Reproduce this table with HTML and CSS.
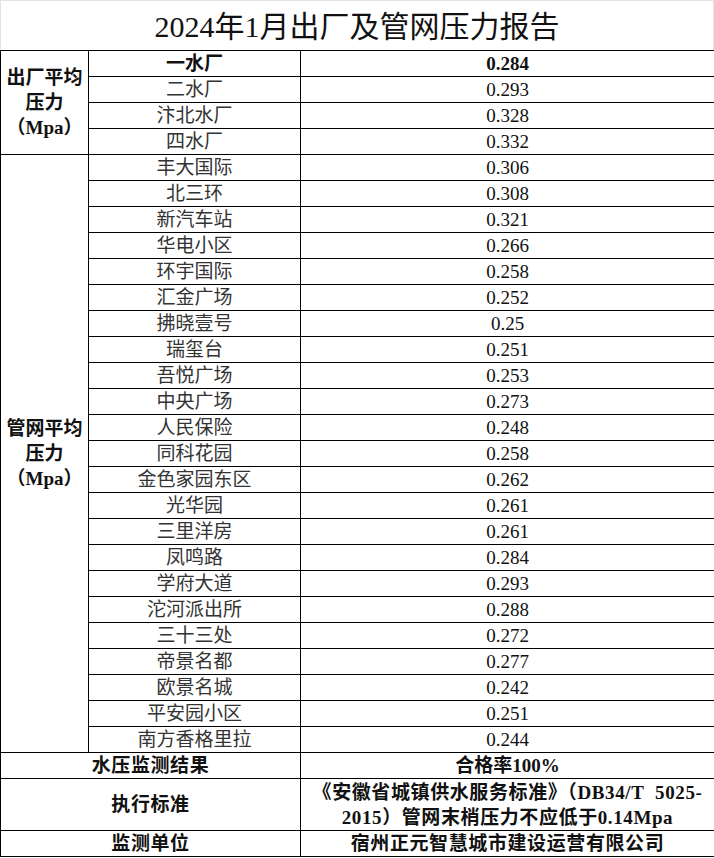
FILE: index.html
```html
<!DOCTYPE html>
<html lang="zh">
<head>
<meta charset="utf-8">
<title>2024年1月出厂及管网压力报告</title>
<link rel="stylesheet" href="styles.css">
</head>
<body>
<div class="sheet">
  <div class="title">2024年1月出厂及管网压力报告</div>
  <table class="report">
    <colgroup><col class="c1"><col class="c2"><col class="c3"></colgroup>
    <tbody>
      <tr class="strong"><td rowspan="4" class="group">出厂平均<br>压力<br>（Mpa）</td><td class="name">一水厂</td><td class="val">0.284</td></tr>
      <tr><td class="name">二水厂</td><td class="val">0.293</td></tr>
      <tr><td class="name">汴北水厂</td><td class="val">0.328</td></tr>
      <tr><td class="name">四水厂</td><td class="val">0.332</td></tr>
      <tr><td rowspan="23" class="group">管网平均<br>压力<br>（Mpa）</td><td class="name">丰大国际</td><td class="val">0.306</td></tr>
      <tr><td class="name">北三环</td><td class="val">0.308</td></tr>
      <tr><td class="name">新汽车站</td><td class="val">0.321</td></tr>
      <tr><td class="name">华电小区</td><td class="val">0.266</td></tr>
      <tr><td class="name">环宇国际</td><td class="val">0.258</td></tr>
      <tr><td class="name">汇金广场</td><td class="val">0.252</td></tr>
      <tr><td class="name">拂晓壹号</td><td class="val">0.25</td></tr>
      <tr><td class="name">瑞玺台</td><td class="val">0.251</td></tr>
      <tr><td class="name">吾悦广场</td><td class="val">0.253</td></tr>
      <tr><td class="name">中央广场</td><td class="val">0.273</td></tr>
      <tr><td class="name">人民保险</td><td class="val">0.248</td></tr>
      <tr><td class="name">同科花园</td><td class="val">0.258</td></tr>
      <tr><td class="name">金色家园东区</td><td class="val">0.262</td></tr>
      <tr><td class="name">光华园</td><td class="val">0.261</td></tr>
      <tr><td class="name">三里洋房</td><td class="val">0.261</td></tr>
      <tr><td class="name">凤鸣路</td><td class="val">0.284</td></tr>
      <tr><td class="name">学府大道</td><td class="val">0.293</td></tr>
      <tr><td class="name">沱河派出所</td><td class="val">0.288</td></tr>
      <tr><td class="name">三十三处</td><td class="val">0.272</td></tr>
      <tr><td class="name">帝景名都</td><td class="val">0.277</td></tr>
      <tr><td class="name">欧景名城</td><td class="val">0.242</td></tr>
      <tr><td class="name">平安园小区</td><td class="val">0.251</td></tr>
      <tr><td class="name">南方香格里拉</td><td class="val">0.244</td></tr>
      <tr class="strong"><td colspan="2" class="label">水压监测结果</td><td class="val">合格率100%</td></tr>
      <tr class="strong tall"><td colspan="2" class="label">执行标准</td><td class="val wide">《安徽省城镇供水服务标准》（DB34/T&nbsp;&nbsp;5025-<br>2015）管网末梢压力不应低于0.14Mpa</td></tr>
      <tr class="strong"><td colspan="2" class="label">监测单位</td><td class="val wide">宿州正元智慧城市建设运营有限公司</td></tr>
    </tbody>
  </table>
</div>
</body>
</html>
```

FILE: styles.css
```css
html, body {
  margin: 0;
  padding: 0;
  background: #fff;
}

body {
  font-family: "Liberation Serif", "Noto Sans CJK SC", serif;
  color: #111;
}

.sheet {
  width: 714px;
}

.title {
  box-sizing: border-box;
  height: 50px;
  border: 1px solid #e3e3e3;
  border-bottom: none;
  text-align: center;
  font-size: 30px;
  line-height: 52px;
  color: #111;
  overflow: hidden;
}

.report {
  width: 714px;
  border-collapse: collapse;
  table-layout: fixed;
}

.c1 { width: 88px; }
.c2 { width: 212px; }
.c3 { width: 414px; }

.report td {
  border: 1px solid #000;
  height: 25px;
  padding: 0;
  text-align: center;
  vertical-align: middle;
  font-size: 19px;
  line-height: 25px;
  white-space: nowrap;
}

.report .group {
  font-weight: bold;
  color: #111;
}

.report .name {
  color: #333;
}

.report .val {
  color: #111;
}

.report .strong td {
  font-weight: bold;
  color: #111;
}

.report .strong .label,
.report .strong .wide {
  letter-spacing: 0.6px;
}

.report .tall td {
  height: 51px;
}
```
